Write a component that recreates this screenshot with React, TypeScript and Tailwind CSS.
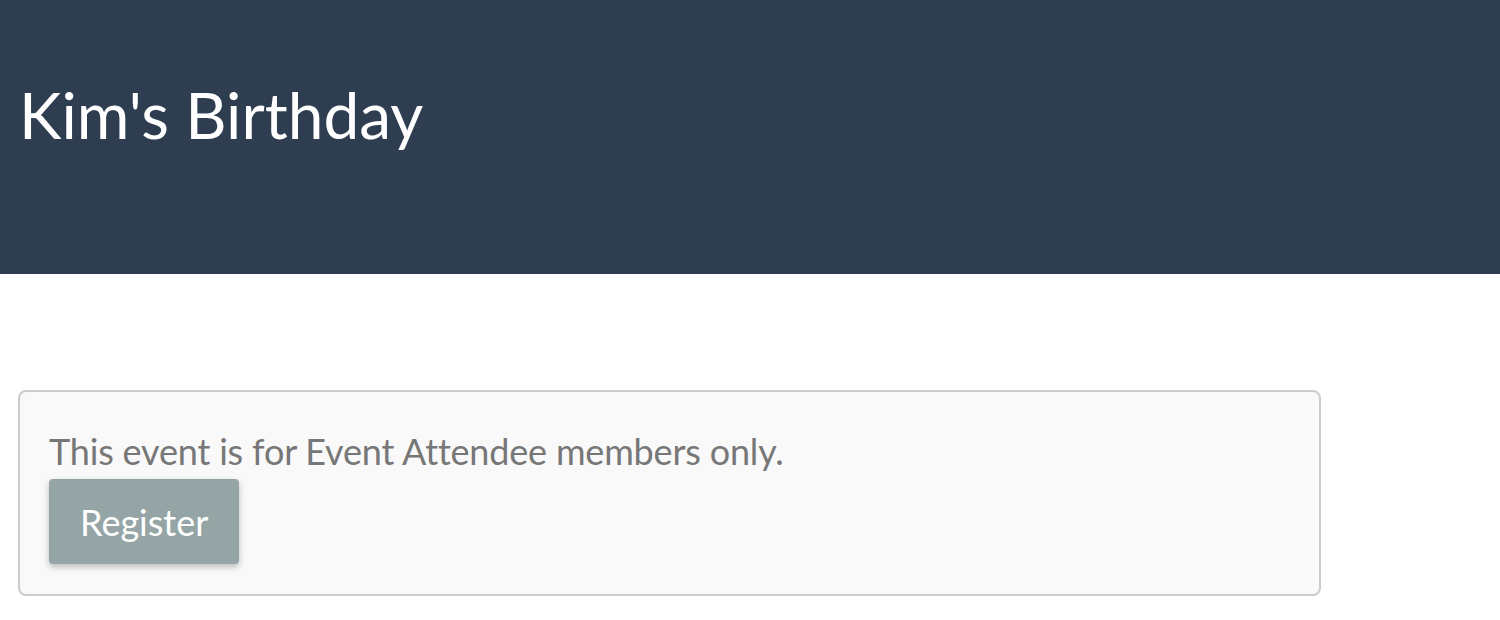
export default function App() {
  return (
    <div className="min-h-[620px] bg-white font-['Lato','Open_Sans',sans-serif]">
      <header className="h-[274px] bg-[#2e3d50] pl-[19px] pr-5 pt-[70px]">
        <h1 className="text-[64px] leading-[90px] font-normal text-white">Kim's Birthday</h1>
      </header>
      <main className="px-[18px] pt-[116px]">
        <div className="w-[1303px] rounded-lg border-2 border-[#cccccc] bg-[#f9f9f9] px-[29px] pt-[33px] pb-[30px]">
          <p className="text-[36px] leading-[52px] tracking-[-0.18px] text-[#777777]">
            This event is for Event Attendee members only.
          </p>
          <button className="mt-[2px] h-[85px] rounded px-[31px] text-[36px] text-white bg-[#95a5a6] shadow-[0_3px_6px_rgba(0,0,0,0.25)]">
            Register
          </button>
        </div>
      </main>
    </div>
  );
}
